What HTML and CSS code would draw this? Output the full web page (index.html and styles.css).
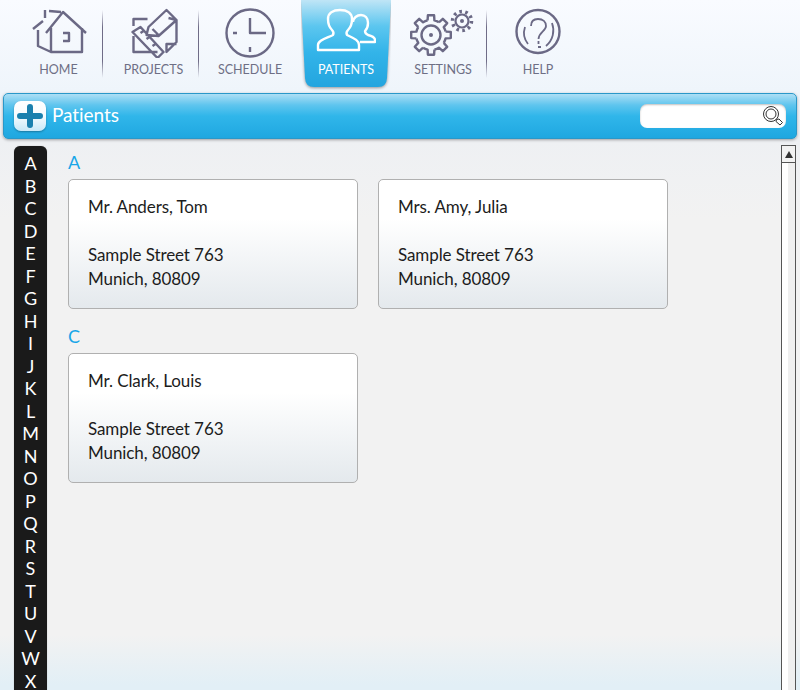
FILE: index.html
```html
<!DOCTYPE html>
<html lang="en">
<head>
<meta charset="utf-8">
<title>Patients</title>
<link rel="stylesheet" href="styles.css">
</head>
<body>
<div class="page">
  <nav class="nav">
    <a class="nav-item w-home sep">
      <svg class="icon" width="60" height="52" viewBox="28 6 60 52">
        <path d="M45 33 62 12 85 33M50 28V52H81V28M50 52 37 46V30M32 29 42 21M44 18V10M48 11 60 12M62 33H68V41H62"/>
      </svg>
      <span class="nav-label">HOME</span>
    </a>
    <a class="nav-item w-projects sep">
      <svg class="icon" width="60" height="52" viewBox="123.500 6 60 52">
        <path d="M146 35 148 27 166 10 176 20 158 36ZM152 29 158 35M133 26V19H147M133 36V52H157M168 18 176 20V42L166 52V44H176M132 32 140 27 163 52 157 58Z"/>
        <path d="M140 33 143 31M146 39 149 37M152 46 155 44"/>
      </svg>
      <span class="nav-label">PROJECTS</span>
    </a>
    <a class="nav-item w-schedule">
      <svg class="icon" width="60" height="52" viewBox="220 6 60 52">
        <circle cx="250" cy="33" r="23.500"/>
        <path d="M250 18V33H266M233 33H237M250 47V52"/>
      </svg>
      <span class="nav-label">SCHEDULE</span>
    </a>
    <a class="nav-item w-patients active">
      <svg class="tab-bg" width="90" height="92" viewBox="0 0 90 92">
        <defs>
          <linearGradient id="tabFill" x1="0" y1="0" x2="0" y2="1">
            <stop offset="0" stop-color="#bfe5f6"/>
            <stop offset=".3" stop-color="#5cc6ef"/>
            <stop offset=".6" stop-color="#33b4e9"/>
            <stop offset="1" stop-color="#23a5df"/>
          </linearGradient>
        </defs>
        <path class="tab-shape" fill="url(#tabFill)" d="M0 0 4 78Q4.500 87 13 87H77Q85.500 87 86 78L90 0Z"/>
      </svg>
      <svg class="icon icon-white" width="60" height="52" viewBox="316 6 60 52">
        <path d="M318 50V45C318 40 327 38 333 35 334 33 333 31 332 30 329 27 328 23 328 19 328 13 333 10 340 10 347 10 352 13 352 19 352 23 351 27 348 30 347 31 346 33 347 35 353 38 359 40 359 45V50Z"/>
        <path d="M353 22C353 18 357 15 361 15 365 15 368 18 368 23 368 26 367 29 365 31 365 33 366 34 368 35 372 36 375 37 375 40V42H360"/>
      </svg>
      <span class="nav-label">PATIENTS</span>
    </a>
    <a class="nav-item w-settings sep">
      <svg class="icon" width="70" height="52" viewBox="408 6 70 52">
        <defs>
          <path id="tooth" d="M-3.400-14.600-3.100-19.800H3.100L3.400-14.600A15 15 0 0 1 7.900-12.700"/>
        </defs>
        <g transform="translate(431 35)">
          <use href="#tooth"/>
          <use href="#tooth" transform="rotate(45)"/>
          <use href="#tooth" transform="rotate(90)"/>
          <use href="#tooth" transform="rotate(135)"/>
          <use href="#tooth" transform="rotate(180)"/>
          <use href="#tooth" transform="rotate(225)"/>
          <use href="#tooth" transform="rotate(270)"/>
          <use href="#tooth" transform="rotate(315)"/>
          <circle r="9.500"/>
          <circle class="dot" r="2"/>
        </g>
        <g transform="translate(462 21)">
          <circle r="6.500" class="thick"/>
          <circle class="dot" r="2"/>
          <circle r="9.500" class="teeth"/>
        </g>
      </svg>
      <span class="nav-label">SETTINGS</span>
    </a>
    <a class="nav-item w-help">
      <svg class="icon" width="60" height="52" viewBox="508 6 60 52">
        <circle cx="538" cy="31.500" r="21.500"/>
        <path class="thin" d="M525 27C523 33 524 39 528 44M552 23C555 31 553 40 546 46M538 47 541 47"/>
        <path class="thin" d="M531 26C531 21 534 19 538 19 543 19 546 22 546 26 546 31 539 32 538.500 39M538.500 41V44"/>
      </svg>
      <span class="nav-label">HELP</span>
    </a>
  </nav>

  <header class="bar">
    <button class="add-btn" type="button" aria-label="Add">
      <svg width="26" height="24" viewBox="0 0 26 24">
        <path class="plus" d="M3 12H23M13 3V21"/>
      </svg>
    </button>
    <h1 class="bar-title">Patients</h1>
    <div class="search">
      <svg class="search-icon" width="22" height="22" viewBox="0 0 22 22">
        <circle cx="9" cy="9" r="7.500"/>
        <circle cx="9" cy="9" r="5"/>
        <path d="M14.500 14.500 17 14 20.500 17.500 18 20 14 16.500Z"/>
      </svg>
    </div>
  </header>

  <div class="main">
    <ul class="alpha">
      <li>A</li><li>B</li><li>C</li><li>D</li><li>E</li><li>F</li><li>G</li><li>H</li><li>I</li><li>J</li><li>K</li><li>L</li><li>M</li><li>N</li><li>O</li><li>P</li><li>Q</li><li>R</li><li>S</li><li>T</li><li>U</li><li>V</li><li>W</li><li>X</li>
    </ul>
    <div class="content">
      <section class="group">
        <h2 class="letter">A</h2>
        <div class="cards">
          <article class="card">
            <p>Mr. Anders, Tom</p>
            <p class="addr">Sample Street 763</p>
            <p>Munich, 80809</p>
          </article>
          <article class="card">
            <p>Mrs. Amy, Julia</p>
            <p class="addr">Sample Street 763</p>
            <p>Munich, 80809</p>
          </article>
        </div>
      </section>
      <section class="group">
        <h2 class="letter">C</h2>
        <div class="cards">
          <article class="card">
            <p>Mr. Clark, Louis</p>
            <p class="addr">Sample Street 763</p>
            <p>Munich, 80809</p>
          </article>
        </div>
      </section>
    </div>
    <div class="scrollbar">
      <div class="scroll-up"></div>
      <div class="scroll-track"></div>
    </div>
  </div>
</div>
</body>
</html>
```
FILE: styles.css
```css
* { box-sizing: border-box; }
html, body { margin: 0; height: 100%; overflow: hidden; }
body { font-family: "Lato", "Open Sans", sans-serif; color: #1c1c1c; }
.page {
  height: 690px;
  display: flex;
  flex-direction: column;
  background: linear-gradient(180deg, #f9fbff 0, #eff5fb 90px, #eef0f3 140px, #f2f2f2 220px, #f2f2f2 635px, #e2eff6 685px);
}
.nav { display: flex; height: 93px; padding-left: 14px; flex: none; }
.nav-item {
  position: relative;
  display: flex;
  flex-direction: column;
  align-items: center;
  padding-top: 6px;
  height: 87px;
}
.sep::after {
  content: "";
  position: absolute;
  right: 0;
  top: 10px;
  height: 68px;
  width: 1px;
  background: linear-gradient(180deg, rgba(111,108,135,0), #6f6c87 25%, #6f6c87 75%, rgba(111,108,135,0));
}
.w-home { width: 89px; }
.w-projects { width: 96px; padding-left: 5px; }
.w-schedule { width: 102px; }
.w-patients { width: 90px; }
.w-settings { width: 96px; padding-left: 8px; }
.w-help { width: 102px; }
.icon { display: block; flex: none; fill: none; stroke: #6b6985; stroke-width: 2.400; stroke-linejoin: round; position: relative; }
.icon-white { stroke: #fff; stroke-width: 2.400; }
.thin { stroke-width: 1.800; }
.thick { stroke-width: 2.200; }
.dot { fill: #6b6985; stroke: none; }
.teeth { stroke-width: 3.500; stroke-dasharray: 2.600 3.370; }
.tab-bg { position: absolute; left: 0; top: 0; }
.tab-shape { filter: drop-shadow(0 1px 1.500px rgba(0,0,0,.4)); }
.nav-label {
  position: relative;
  margin-top: 4px;
  font-size: 12.500px;
  line-height: 16px;
  color: #6e6f85;
  white-space: nowrap;
}
.active .nav-label { color: #fff; }

.bar {
  flex: none;
  height: 46px;
  margin: 0 3px;
  padding: 0 10px;
  display: flex;
  align-items: center;
  border: 1px solid #2a98c9;
  border-radius: 5px;
  background: linear-gradient(180deg, #aedff5 0, #5fc5ee 25%, #30b6ea 50%, #1fa7e0 100%);
  box-shadow: 0 1px 3px rgba(0,0,0,.35);
}
.add-btn {
  width: 32px;
  height: 30px;
  padding: 0;
  border: 0;
  border-radius: 7px;
  display: flex;
  align-items: center;
  justify-content: center;
  background: linear-gradient(180deg, #fff 0, #f6fbfe 50%, #c8e8f7 100%);
  box-shadow: 0 1px 2px rgba(0,0,0,.3);
}
.plus { fill: none; stroke: #1a80ae; stroke-width: 6; stroke-linecap: round; }
.bar-title { margin: 0 0 3px 6px; font-size: 19px; font-weight: 400; color: #fff; letter-spacing: -.05px; }
.search {
  margin-left: auto;
  width: 146px;
  height: 24px;
  display: flex;
  align-items: center;
  justify-content: flex-end;
  padding-right: 2px;
  background: #fff;
  border-radius: 7px;
  box-shadow: inset 0 1px 2px rgba(0,0,0,.25);
}
.search-icon { fill: none; stroke: #333; stroke-width: 1; }

.main { flex: 1; min-height: 0; display: flex; overflow: hidden; }
.alpha {
  list-style: none;
  flex: none;
  width: 33px;
  height: 560px;
  margin: 7px 0 0 14px;
  padding: 6px 0 0;
  background: #1a1a1a;
  border-radius: 6px 6px 0 0;
  box-shadow: 0 0 1px #999;
}
.alpha li { height: 22.500px; line-height: 22.500px; text-align: center; font-size: 18px; color: #fff; }
.content { flex: 1; min-width: 0; padding: 13px 0 0 21px; }
.group { margin-bottom: 17px; }
.letter { margin: 0 0 7px; height: 20px; line-height: 20px; font-size: 18px; font-weight: 400; color: #17a6e8; }
.cards { display: flex; gap: 20px; }
.card {
  width: 290px;
  height: 130px;
  padding: 15px 19px;
  border: 1px solid #b0b0b0;
  border-radius: 5px;
  background: linear-gradient(180deg, #fff 0, #fff 30%, #e4e9ed 100%);
}
.card p { margin: 0; font-size: 17px; line-height: 24px; letter-spacing: -.1px; }
.card .addr { margin-top: 24px; }
.scrollbar {
  flex: none;
  width: 15px;
  margin: 6px 4px 0 0;
  border: 1px solid #555;
  border-bottom: 0;
  background: linear-gradient(90deg, #fff 0, #fff 45%, #efefef 46%, #efefef 100%);
  display: flex;
  flex-direction: column;
}
.scroll-up { height: 17px; position: relative; background: #f2f2f2; border-bottom: 1px solid #555; }
.scroll-up::after {
  content: "";
  position: absolute;
  left: 3px;
  top: 5px;
  border-left: 4px solid transparent;
  border-right: 4px solid transparent;
  border-bottom: 7px solid #333;
}
```
